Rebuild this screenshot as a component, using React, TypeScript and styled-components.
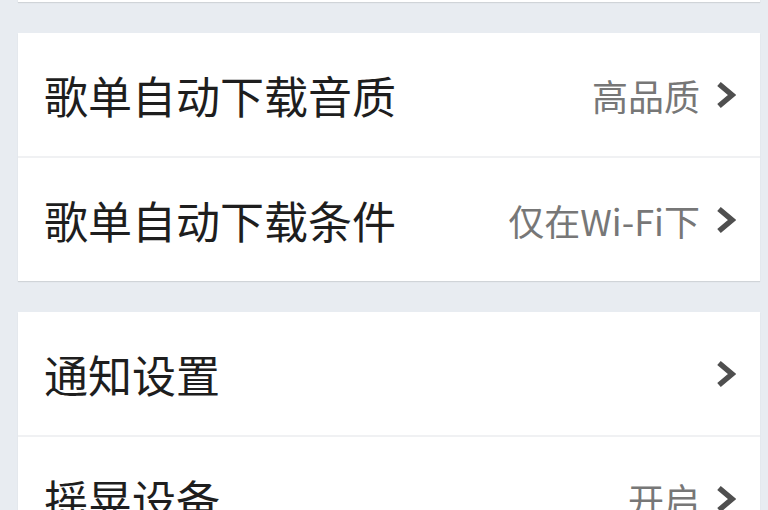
import React from "react";
import styled, { createGlobalStyle } from "styled-components";

const GlobalStyle = createGlobalStyle`
  html, body {
    margin: 0;
    padding: 0;
    background: #e8ecf1;
  }
  body {
    font-family: "Noto Sans CJK SC", "Noto Sans", sans-serif;
    overflow: hidden;
  }
`;

const Page = styled.div`
  display: flex;
  flex-direction: column;
  gap: 31px;
  padding: 0 8px 0 18px;
  height: 510px;
  overflow: hidden;
`;

const Group = styled.div<{ $offset?: number }>`
  background: #ffffff;
  box-shadow: 0 1px 1px rgba(0, 0, 0, 0.1);
  margin-top: ${(p) => (p.$offset ? `${p.$offset}px` : "0")};
  flex-shrink: 0;
`;

const Row = styled.div`
  display: flex;
  align-items: center;
  height: 123px;
  padding: 0 24px 0 26px;
  & + & {
    border-top: 2px solid #f0f1f3;
  }
`;

const Title = styled.span`
  flex: 1;
  font-size: 44px;
  color: #1e1e1e;
  white-space: nowrap;
`;

const Value = styled.span`
  font-size: 36px;
  color: #777777;
  margin-right: 16px;
  white-space: nowrap;
`;

const Chevron = () => (
  <svg width="20" height="28" viewBox="0 0 20 28">
    <polyline
      points="3,3 16,14 3,25"
      fill="none"
      stroke="#4f4f4f"
      strokeWidth="5.5"
      strokeLinejoin="miter"
    />
  </svg>
);

type Item = { title: string; value?: string };

const groups: Item[][] = [
  [
    { title: "歌单自动下载音质", value: "高品质" },
    { title: "歌单自动下载条件", value: "仅在Wi-Fi下" },
  ],
  [
    { title: "通知设置" },
    { title: "摇晃设备", value: "开启" },
  ],
];

export default function App() {
  return (
    <>
      <GlobalStyle />
      <Page>
        {/* group scrolled up past the top edge */}
        <Group $offset={-121}>
          <Row />
        </Group>
        {groups.map((items, gi) => (
          <Group key={gi}>
            {items.map((it) => (
              <Row key={it.title}>
                <Title>{it.title}</Title>
                {it.value && <Value>{it.value}</Value>}
                <Chevron />
              </Row>
            ))}
          </Group>
        ))}
      </Page>
    </>
  );
}
